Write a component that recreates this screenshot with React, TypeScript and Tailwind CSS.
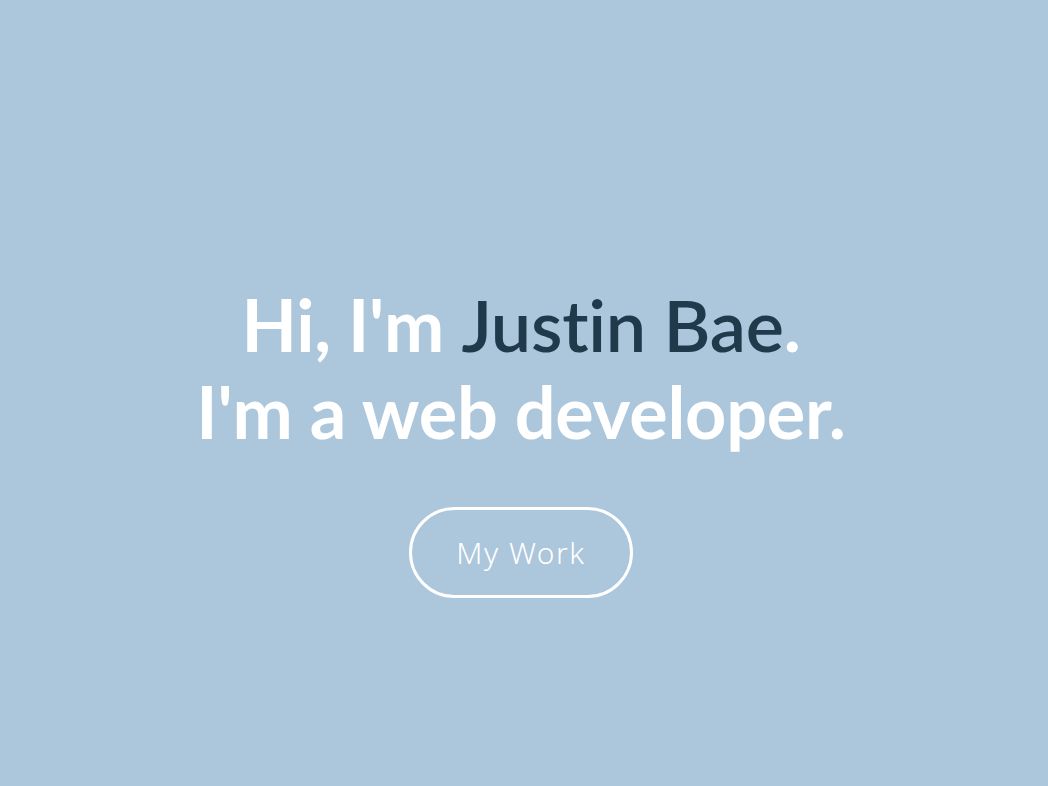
export default function App() {
  return (
    <div className="h-screen w-full bg-[#acc6dc] flex flex-col items-center justify-center pt-[93px] pr-[6px]">
      <h1
        className="text-center text-[72px] leading-[1.2] font-bold text-white tracking-[-0.25px] [font-variant-ligatures:none]"
        style={{ fontFamily: "Lato, 'Noto Sans', sans-serif" }}
      >
        Hi, I'm <span className="text-[#203a4c] font-semibold">Justin Bae</span>.
        <br />
        I'm a web developer.
      </h1>
      <button
        className="mt-[53px] w-[224px] h-[91px] rounded-full border-[3px] border-white text-white text-[30px] font-light tracking-[1.5px]"
        style={{ fontFamily: "'Noto Sans', sans-serif" }}
      >
        My Work
      </button>
    </div>
  );
}
